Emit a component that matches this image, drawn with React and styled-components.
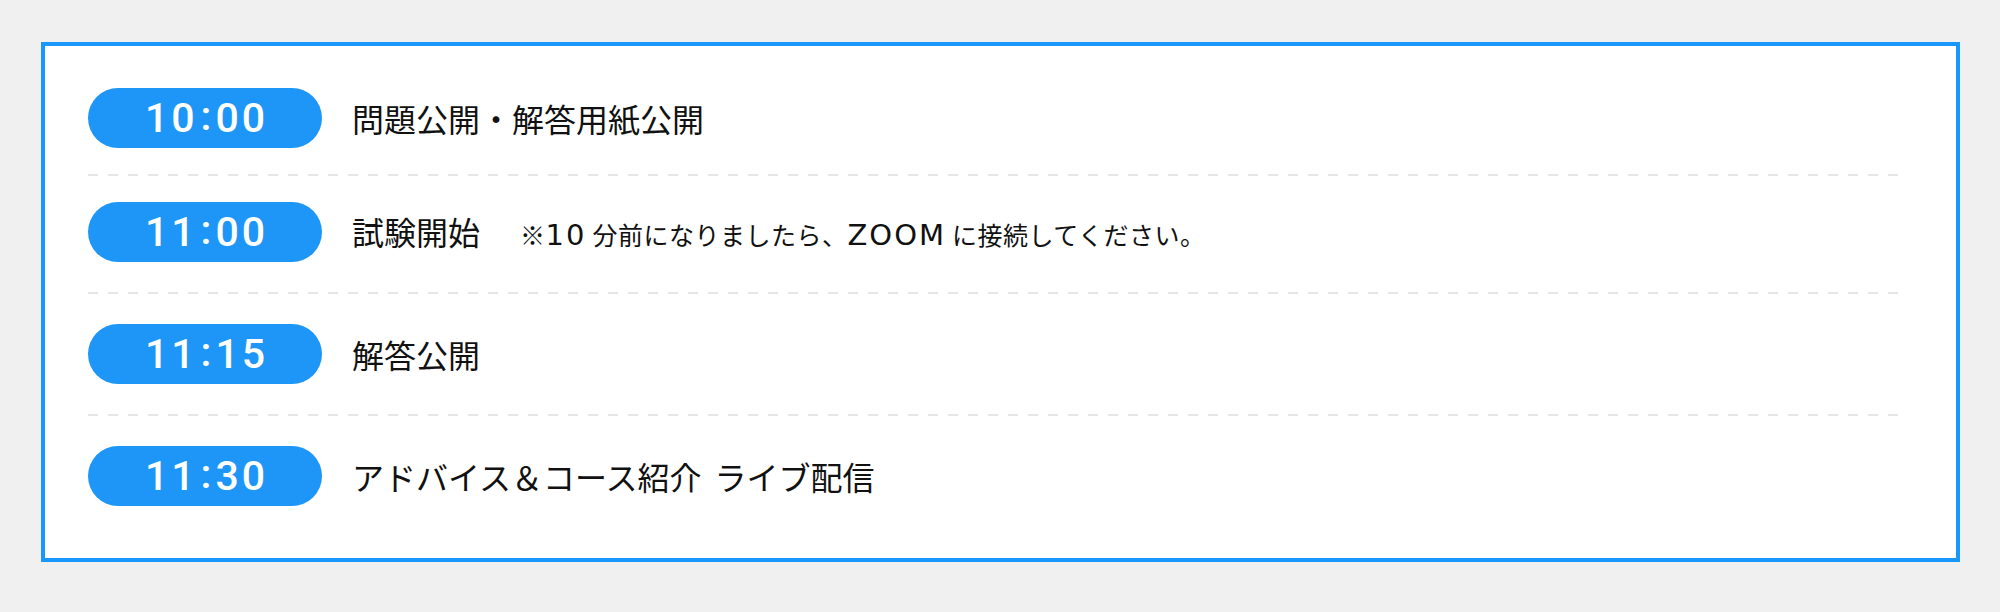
import React from 'react';
import styled, { createGlobalStyle } from 'styled-components';

const GlobalStyle = createGlobalStyle`
    body {
        margin: 0;
        background: #f0f0f0;
        font-family: "Noto Sans CJK JP", "Noto Sans", sans-serif;
        color: #111;
    }
`;

const Page = styled.div`
    padding: 42px 0 50px 41px;
`;

const Panel = styled.section`
    width: 1919px;
    box-sizing: border-box;
    background: #fff;
    border: 4px solid #1a97fa;
    padding: 42px 50px 52px 43px;
`;

const Divider = styled.div`
    height: 2px;
    background: repeating-linear-gradient(to right, #e6e6e6 0 10px, transparent 10px 20px);
`;

const Row = styled.div`
    display: flex;
    align-items: center;
    padding: 30px 0;

    &:first-child {
        padding: 0 0 26px;
    }
    &:first-child + ${Divider} + & {
        padding-top: 26px;
    }
    &:last-child {
        padding-bottom: 0;
    }
`;

const TimePill = styled.div`
    flex: 0 0 234px;
    height: 60px;
    border-radius: 30px;
    background: #1e96f8;
    color: #fff;
    display: flex;
    align-items: center;
    justify-content: center;
    font-family: Roboto, "Liberation Sans", sans-serif;
    font-size: 41px;
    font-weight: 500;
    letter-spacing: 3px;
    line-height: 1;
    padding-left: 3px;
    box-sizing: border-box;
`;

const Colon = styled.span`
    margin: 0 1px 0 3px;
    position: relative;
    top: -2px;
`;

const Label = styled.div`
    margin-left: 30px;
    font-size: 32px;
    line-height: 1.2;
    word-spacing: 6px;
    white-space: nowrap;
`;

const Note = styled.span`
    margin-left: 40px;
    font-size: 25px;
    letter-spacing: 0.5px;
    word-spacing: 0;
`;

/* latin bits of the note are set wide, like the original's full-width glyphs */
const Latin = styled.span`
    font-family: "DejaVu Sans", sans-serif;
    font-size: 29px;
    letter-spacing: 2px;
    margin-right: 6px;
`;

const schedule = [
    { time: ['10', '00'], label: '問題公開・解答用紙公開' },
    {
        time: ['11', '00'],
        label: '試験開始',
        note: ['※', '10', '分前になりましたら、', 'ZOOM', 'に接続してください。'],
    },
    { time: ['11', '15'], label: '解答公開' },
    { time: ['11', '30'], label: 'アドバイス＆コース紹介 ライブ配信' },
];

const App = () => (
    <>
        <GlobalStyle />
        <Page>
            <Panel>
                {schedule.map((item, i) => (
                    <React.Fragment key={item.label}>
                        {i > 0 && <Divider />}
                        <Row>
                            <TimePill>
                                {item.time[0]}<Colon>:</Colon>{item.time[1]}
                            </TimePill>
                            <Label>
                                {item.label}
                                {item.note && (
                                    <Note>
                                        {item.note.map((part, j) =>
                                            j % 2 === 1 ? <Latin key={j}>{part}</Latin> : part
                                        )}
                                    </Note>
                                )}
                            </Label>
                        </Row>
                    </React.Fragment>
                ))}
            </Panel>
        </Page>
    </>
);

export default App;
